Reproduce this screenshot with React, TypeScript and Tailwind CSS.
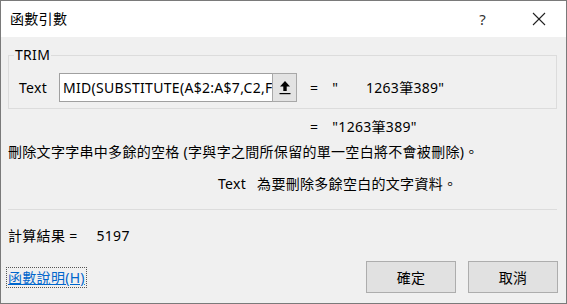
const App = () => {
    return (
        <div className="w-[567px] h-[304px] flex flex-col border border-[#7a7a7a] bg-[#f0f0f0] text-[14px] tracking-[0.3px] text-black font-['Noto_Sans','Noto_Sans_CJK_TC',sans-serif] overflow-hidden">
            {/* title bar */}
            <div className="h-[36px] bg-white flex flex-row items-center pl-[9px] shrink-0">
                <span className="leading-[18px]">函數引數</span>
                <span className="ml-auto text-[15px] leading-[18px] text-[#333]">?</span>
                <svg className="ml-[46px] mr-[20px]" width="14" height="14" viewBox="0 0 14 14">
                    <line x1="1" y1="1" x2="13" y2="13" stroke="#222" strokeWidth="1.1" />
                    <line x1="13" y1="1" x2="1" y2="13" stroke="#222" strokeWidth="1.1" />
                </svg>
            </div>

            <div className="flex flex-col px-[7px] flex-1">
                <fieldset className="mt-[9px] mr-[2px] border border-[#dcdcdc] pl-[10px] pt-[9px] pb-[6px]">
                    <legend className="-ml-[5px] px-[1px] leading-[18px]">TRIM</legend>
                    <div className="flex flex-row items-center h-[29px]">
                        <label className="w-[40px] leading-[18px]">Text</label>
                        <div className="w-[214px] h-[29px] bg-white border border-[#a0a0a0] pl-[3px] overflow-hidden whitespace-nowrap leading-[27px]">
                            MID(SUBSTITUTE(A$2:A$7,C2,F
                        </div>
                        <button className="w-[25px] h-[29px] -ml-px bg-[#e3e3e3] border border-[#a8a8a8] flex items-center justify-center">
                            <svg width="12" height="15" viewBox="0 0 12 15">
                                <polygon points="6,1 11,6.5 1,6.5" fill="#000" />
                                <rect x="4.3" y="6" width="3.4" height="5" fill="#000" />
                                <rect x="0.5" y="13" width="11" height="1.2" fill="#000" />
                            </svg>
                        </button>
                        <span className="ml-[13px] leading-[18px]">=</span>
                        <span className="ml-[14px] leading-[18px] whitespace-pre">{'"       1263筆389"'}</span>
                    </div>
                </fieldset>

                <div className="mt-[9px] pl-[302px] flex flex-row leading-[18px]">
                    <span>=</span>
                    <span className="ml-[14px]">"1263筆389"</span>
                </div>

                <p className="mt-[7px] leading-[18px] whitespace-nowrap">刪除文字字串中多餘的空格 (字與字之間所保留的單一空白將不會被刪除)。</p>

                <div className="mt-[14px] pl-[210px] flex flex-row leading-[18px]">
                    <span>Text</span>
                    <span className="ml-[11px]">為要刪除多餘空白的文字資料。</span>
                </div>

                <div className="mt-[16px] mr-[2px] h-px bg-[#dcdcdc]"></div>

                <div className="mt-[17px] flex flex-row leading-[18px]">
                    <span>計算結果 =</span>
                    <span className="ml-[19px]">5197</span>
                </div>

                <div className="mt-[16px] mr-[1px] flex flex-row items-center">
                    <a className="-ml-[2px] px-[1px] border border-dotted border-[#555] text-[#0066cc] underline leading-[19px]" href="#">函數說明(H)</a>
                    <button className="ml-auto w-[90px] h-[32px] bg-[#e1e1e1] border border-[#adadad]">確定</button>
                    <button className="ml-[12px] w-[90px] h-[32px] bg-[#e1e1e1] border border-[#adadad]">取消</button>
                </div>
            </div>
        </div>
    )
}

export default App;
